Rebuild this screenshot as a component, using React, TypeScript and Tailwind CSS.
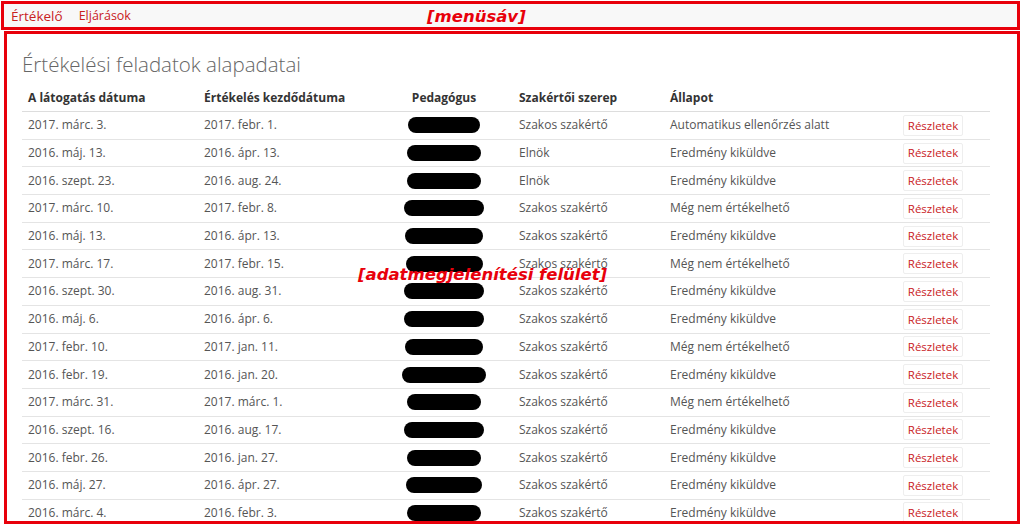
const ROWS: [string, string, number, string, string][] = [
  ['2017. márc. 3.', '2017. febr. 1.', 72, 'Szakos szakértő', 'Automatikus ellenőrzés alatt'],
  ['2016. máj. 13.', '2016. ápr. 13.', 74, 'Elnök', 'Eredmény kiküldve'],
  ['2016. szept. 23.', '2016. aug. 24.', 74, 'Elnök', 'Eredmény kiküldve'],
  ['2017. márc. 10.', '2017. febr. 8.', 80, 'Szakos szakértő', 'Még nem értékelhető'],
  ['2016. máj. 13.', '2016. ápr. 13.', 78, 'Szakos szakértő', 'Eredmény kiküldve'],
  ['2017. márc. 17.', '2017. febr. 15.', 77, 'Szakos szakértő', 'Még nem értékelhető'],
  ['2016. szept. 30.', '2016. aug. 31.', 80, 'Szakos szakértő', 'Eredmény kiküldve'],
  ['2016. máj. 6.', '2016. ápr. 6.', 80, 'Szakos szakértő', 'Eredmény kiküldve'],
  ['2017. febr. 10.', '2017. jan. 11.', 78, 'Szakos szakértő', 'Még nem értékelhető'],
  ['2016. febr. 19.', '2016. jan. 20.', 84, 'Szakos szakértő', 'Eredmény kiküldve'],
  ['2017. márc. 31.', '2017. márc. 1.', 74, 'Szakos szakértő', 'Még nem értékelhető'],
  ['2016. szept. 16.', '2016. aug. 17.', 80, 'Szakos szakértő', 'Eredmény kiküldve'],
  ['2016. febr. 26.', '2016. jan. 27.', 74, 'Szakos szakértő', 'Eredmény kiküldve'],
  ['2016. máj. 27.', '2016. ápr. 27.', 76, 'Szakos szakértő', 'Eredmény kiküldve'],
  ['2016. márc. 4.', '2016. febr. 3.', 74, 'Szakos szakértő', 'Eredmény kiküldve'],
]

const GRID = 'grid grid-cols-[176px_190px_112px_164px_217px_109px] items-center'

function Redacted({ width }: { width: number }) {
  return <span className="block h-[16px] rounded-full bg-black" style={{ width }} />
}

export default function App() {
  return (
    <div
      className="relative h-[531px] w-[1024px] overflow-hidden bg-white text-[12px] text-[#555]"
      style={{ fontFamily: '"Open Sans", "Liberation Sans", sans-serif' }}
    >
      <nav className="ml-[1px] mt-[1px] flex h-[29px] w-[1019px] items-center gap-[16px] border-[3px] border-[#e8000b] bg-[#f8f8f8] pl-[7px] pt-[1px] text-[12.5px] text-[#c9211e]">
        <span className="text-[13.5px]">Értékelő</span>
        <span>Eljárások</span>
      </nav>

      <main className="ml-[4px] mt-[1px] h-[493px] w-[1016px] overflow-hidden border-[3px] border-[#e8000b] pl-[15px] pt-[17px]">
        <h1 className="text-[20.5px] font-light leading-[26px] text-[#666]">
          Értékelési feladatok alapadatai
        </h1>

        <div className="mt-[8px] w-[968px]">
          <div className={`${GRID} h-[27px] border-b border-[#ddd] font-bold text-[#333]`}>
            <div className="pl-[6px]">A látogatás dátuma</div>
            <div className="pl-[6px]">Értékelés kezdődátuma</div>
            <div className="text-center">Pedagógus</div>
            <div className="pl-[19px]">Szakértői szerep</div>
            <div className="pl-[6px]">Állapot</div>
            <div />
          </div>

          {ROWS.map(([visit, start, w, role, status], i) => (
            <div key={i} className={`${GRID} h-[27.7px] border-b border-[#e4e4e4]`}>
              <div className="pl-[6px]">{visit}</div>
              <div className="pl-[6px]">{start}</div>
              <div className="flex justify-center">
                <Redacted width={w} />
              </div>
              <div className="pl-[19px]">{role}</div>
              <div className="pl-[6px]">{status}</div>
              <div className="pl-[22px]">
                <span className="inline-flex h-[21px] w-[60px] items-center justify-center rounded-[2px] border border-[#eee] bg-white text-[11.5px] text-[#c9211e]">
                  Részletek
                </span>
              </div>
            </div>
          ))}
        </div>
      </main>

      <span
        className="absolute left-[427px] top-[6px] text-[16.5px] font-bold italic leading-[22px] text-[#e8000b]"
        style={{ fontFamily: '"DejaVu Sans", sans-serif' }}
      >
        [menüsáv]
      </span>
      <span
        className="absolute left-[358px] top-[264px] text-[16.5px] font-bold italic leading-[22px] text-[#e8000b]"
        style={{ fontFamily: '"DejaVu Sans", sans-serif' }}
      >
        [adatmegjelenítési felület]
      </span>
    </div>
  )
}
